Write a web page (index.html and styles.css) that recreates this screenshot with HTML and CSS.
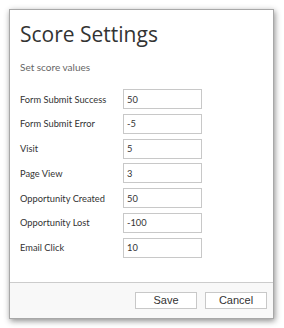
FILE: index.html
```html
<!DOCTYPE html>
<html lang="en">

<head>
    <meta charset="UTF-8">
    <meta name="viewport" content="width=device-width, initial-scale=1.0">
    <title>Score Settings</title>
    <link rel="stylesheet" href="styles.css">
</head>

<body>
    <div class="dialog">
        <div class="dialog-body">
            <h1 class="dialog-title">Score Settings</h1>
            <p class="dialog-subtitle">Set score values</p>
            <div class="score-grid">
                <label class="score-label">Form Submit Success</label>
                <input class="score-input" type="text" value="50">
                <label class="score-label">Form Submit Error</label>
                <input class="score-input" type="text" value="-5">
                <label class="score-label">Visit</label>
                <input class="score-input" type="text" value="5">
                <label class="score-label">Page View</label>
                <input class="score-input" type="text" value="3">
                <label class="score-label">Opportunity Created</label>
                <input class="score-input" type="text" value="50">
                <label class="score-label">Opportunity Lost</label>
                <input class="score-input" type="text" value="-100">
                <label class="score-label">Email Click</label>
                <input class="score-input" type="text" value="10">
            </div>
        </div>
        <div class="dialog-footer">
            <button class="dialog-button">Save</button>
            <button class="dialog-button">Cancel</button>
        </div>
    </div>
</body>

</html>
```

FILE: styles.css
```css
:root {
    --text-color: #333;
    --subtext-color: #666;
    --border-color: #c8c8c8;
    --footer-bg: #f8f8f8;
}

* {
    margin: 0;
    padding: 0;
    box-sizing: border-box;
}

body {
    font-family: Lato, "Open Sans", sans-serif;
    background: #fff;
    color: var(--text-color);
    padding: 9px 10px 9px 9px;
}

.dialog {
    width: 265px;
    height: 310px;
    border: 1px solid #a8a8a8;
    background: #fff;
    box-shadow: 1px 2px 6px rgba(0, 0, 0, 0.45);
    display: flex;
    flex-direction: column;
}

.dialog-body {
    flex-grow: 1;
    padding: 10px 10px 0;
}

.dialog-title {
    font-family: "Open Sans", sans-serif;
    font-size: 21px;
    font-weight: normal;
    line-height: 28px;
    color: var(--text-color);
}

.dialog-subtitle {
    margin-top: 12px;
    font-size: 10px;
    line-height: 14px;
    color: var(--subtext-color);
}

.score-grid {
    margin-top: 15px;
    display: grid;
    grid-template-columns: 103px 79px;
    row-gap: 4.8px;
    align-items: center;
}

.score-label {
    font-size: 9.3px;
    color: var(--text-color);
}

.score-input {
    height: 20px;
    border: 1px solid var(--border-color);
    padding: 0 3px;
    font-family: inherit;
    font-size: 9.3px;
    color: var(--text-color);
    outline: none;
}

.dialog-footer {
    height: 36px;
    border-top: 1px solid #ccc;
    background: var(--footer-bg);
    display: flex;
    justify-content: flex-end;
    align-items: center;
    gap: 8px;
    padding: 0 6px 1px;
}

.dialog-button {
    width: 62px;
    height: 17px;
    background: #fff;
    border: 1px solid var(--border-color);
    font-family: "Liberation Sans", Arial, sans-serif;
    font-size: 11px;
    color: var(--text-color);
}
```
